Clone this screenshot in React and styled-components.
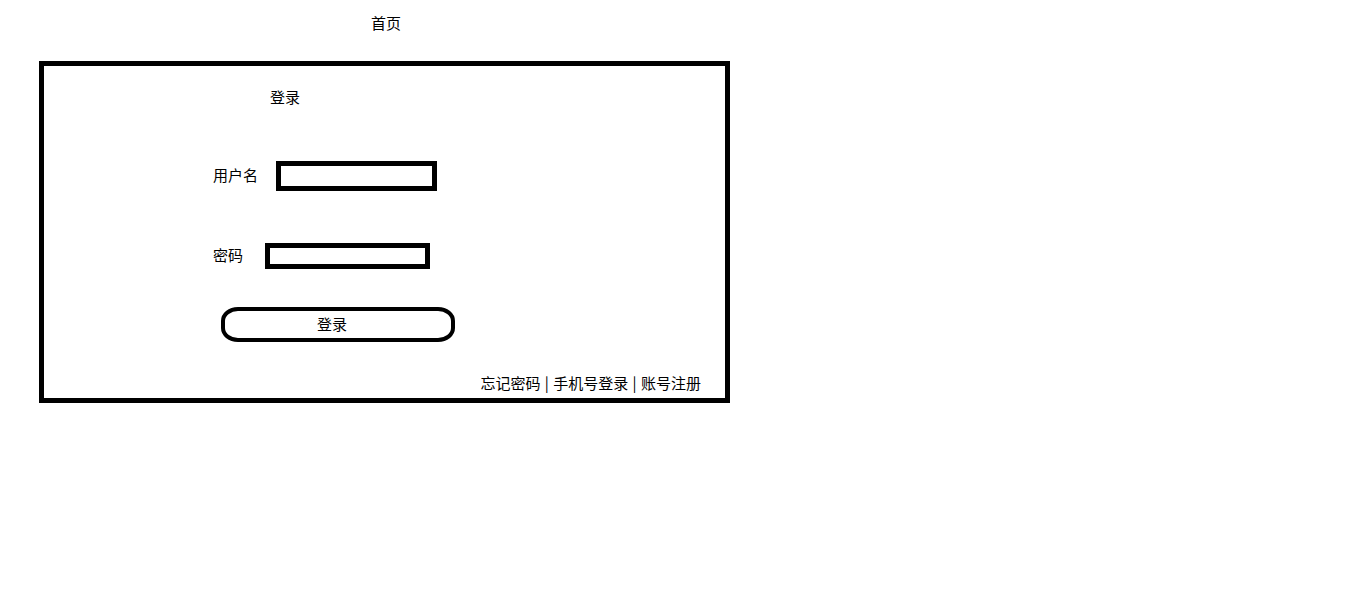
import React from 'react'
import styled, { createGlobalStyle } from 'styled-components'

const GlobalStyle = createGlobalStyle`
    html, body {
        margin: 0;
        padding: 0;
        background: #fff;
        font-family: "Noto Sans CJK SC", "Noto Sans", sans-serif;
        font-size: 15px;
        color: #000;
    }
`

const Header = styled.div`
    height: 48px;
    line-height: 46px;
    padding-left: 371px;
`

const Card = styled.div`
    box-sizing: border-box;
    width: 691px;
    height: 342px;
    margin: 13px 0 0 39px;
    border: 5px solid #000;
    display: flex;
    flex-direction: column;
`

const Title = styled.div`
    margin: 21px 0 0 226px;
    line-height: 20px;
`

const Row = styled.div`
    display: flex;
    align-items: center;
    margin-top: ${props => props.top}px;
    padding-left: 169px;
    gap: ${props => props.gap}px;
`

const Label = styled.label`
    line-height: 20px;
    margin-bottom: 2px;
`

const Input = styled.input`
    box-sizing: border-box;
    width: ${props => props.w}px;
    height: ${props => props.h}px;
    border: 5px solid #000;
    outline: none;
    padding: 0 4px;
    font: inherit;
`

const Button = styled.button`
    box-sizing: border-box;
    width: 234px;
    height: 35px;
    margin: 38px 0 0 177px;
    border: 4px solid #000;
    border-radius: 17px / 14px;
    background: #fff;
    font: inherit;
    color: #000;
    padding: 0 12px 2px 0;
    cursor: pointer;
`

const Links = styled.div`
    align-self: flex-end;
    margin: 31px 24px 0 0;
    line-height: 20px;
    word-spacing: 1px;
`

const LinkText = styled.a`
    color: #000;
    text-decoration: none;
`

const App = () => {
    return (
        <>
            <GlobalStyle />
            <Header>首页</Header>
            <Card>
                <Title>登录</Title>
                <Row top={54} gap={18}>
                    <Label>用户名</Label>
                    <Input w={161} h={30} />
                </Row>
                <Row top={52} gap={22}>
                    <Label>密码</Label>
                    <Input w={165} h={26} type='password' />
                </Row>
                <Button>登录</Button>
                <Links>
                    <LinkText href='#'>忘记密码</LinkText> | <LinkText href='#'>手机号登录</LinkText> | <LinkText href='#'>账号注册</LinkText>
                </Links>
            </Card>
        </>
    )
}

export default App
